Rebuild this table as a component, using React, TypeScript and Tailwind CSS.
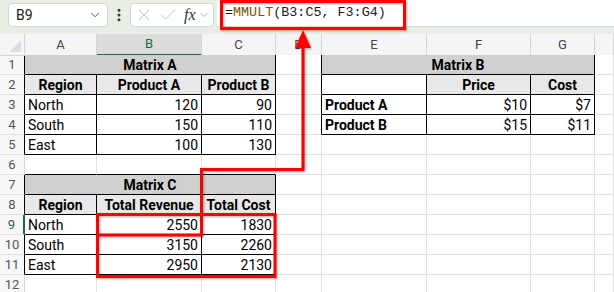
import React from 'react';
import { ChevronDown, X, Check, EllipsisVertical } from 'lucide-react';

type Cell = {
  t?: string;
  b?: boolean;
  align?: 'l' | 'c' | 'r';
  bg?: 'title' | 'head';
  span?: boolean;
};

const COLS = ['A', 'B', 'C', 'D', 'E', 'F', 'G', 'H'];

const title = (t: string): Cell => ({ t, b: true, align: 'c', bg: 'title', span: true });
const head = (t: string): Cell => ({ t, b: true, align: 'c', bg: 'head' });
const num = (t: string): Cell => ({ t, align: 'r' });

const SHEET: Record<number, Record<string, Cell>> = {
  1: { A: title('Matrix A'), E: title('Matrix B') },
  2: { A: head('Region'), B: head('Product A'), C: head('Product B'), F: head('Price'), G: head('Cost') },
  3: { A: { t: 'North' }, B: num('120'), C: num('90'), E: { t: 'Product A', b: true }, F: num('$10'), G: num('$7') },
  4: { A: { t: 'South' }, B: num('150'), C: num('110'), E: { t: 'Product B', b: true }, F: num('$15'), G: num('$11') },
  5: { A: { t: 'East' }, B: num('100'), C: num('130') },
  7: { A: title('Matrix C') },
  8: { A: head('Region'), B: head('Total Revenue'), C: head('Total Cost') },
  9: { A: { t: 'North' }, B: num('2550'), C: num('1830') },
  10: { A: { t: 'South' }, B: num('3150'), C: num('2260') },
  11: { A: { t: 'East' }, B: num('2950'), C: num('2130') },
};

function inTable(row: number, col: number) {
  if (col >= 1 && col <= 3) return (row >= 1 && row <= 5) || (row >= 7 && row <= 11);
  if (col >= 5 && col <= 7) return row >= 1 && row <= 4;
  return false;
}

function Toolbar() {
  return (
    <div className="relative flex h-[34px] shrink-0 items-start bg-[#e9eee5]">
      <div className="ml-[8px] mt-[3px] flex h-[24px] w-[100px] items-center justify-between rounded-[4px] border border-[#d4d4d4] bg-white pl-[7px] pr-[5px]">
        <span className="text-[14px] text-[#222]">B9</span>
        <ChevronDown size={14} strokeWidth={1.5} className="text-[#444]" />
      </div>
      <div className="mt-[7px] flex w-[22px] justify-center">
        <EllipsisVertical size={16} strokeWidth={2.5} className="text-[#333]" />
      </div>
      <div className="mt-[3px] flex h-[24px] w-[84px] items-center rounded-[4px] border border-[#d4d4d4] bg-white pl-[3px]">
        <X size={20} strokeWidth={1} className="text-[#b4b4b4]" />
        <Check size={20} strokeWidth={1} className="ml-[4px] text-[#b4b4b4]" />
        <span className="ml-[6px] font-['Liberation_Serif',serif] text-[16px] italic text-[#333]">fx</span>
        <ChevronDown size={12} strokeWidth={1.3} className="ml-[2px] text-[#888]" />
      </div>
      <div className="ml-[3px] flex h-[27px] flex-1 items-center border-b border-[#d8ddd4] bg-white pl-[8px]">
        <span className="font-['Liberation_Mono',monospace] text-[13.4px] text-[#1a1a1a]">
          =<span className="text-[#7a5200]">MMULT</span>(B3:C5, F3:G4)
        </span>
      </div>
    </div>
  );
}

function ColumnHeader() {
  return (
    <div className="grid h-[21px] shrink-0 grid-cols-[25px_72px_105px_74px_46px_105px_104px_64px_19px] bg-[#f5f5f5]">
      <div className="relative border-r border-b border-r-[#d6d6d6] border-b-[#d6d6d6]">
        <div className="absolute right-[3px] bottom-[3px] h-0 w-0 border-l-[12px] border-t-[12px] border-l-transparent border-t-transparent border-r-0 border-b-[12px] border-b-[#dedede]" />
      </div>
      {COLS.map((c, i) => {
        const selected = c === 'B';
        const black = inTable(1, i + 1);
        return (
          <div
            key={c}
            className={
              'flex items-center justify-center border-r border-r-[#d6d6d6] text-[13px] ' +
              (selected
                ? 'border-b-2 border-b-[#1d6b40] bg-[#dcdcdc] text-[#1d6b40]'
                : black
                  ? 'border-b border-b-black text-[#444]'
                  : 'border-b border-b-[#d6d6d6] text-[#444]')
            }
          >
            {c === 'H' ? '' : c}
          </div>
        );
      })}
    </div>
  );
}

function SheetRow({ row }: { row: number }) {
  const data = SHEET[row] || {};
  const cells: React.ReactNode[] = [];
  for (let i = 0; i < COLS.length; i++) {
    const col = i + 1;
    const key = COLS[i];
    const cell = data[key];
    const span = cell?.span;
    const lastCol = span ? col + 2 : col;
    const rightBlack = inTable(row, lastCol) || inTable(row, lastCol + 1);
    const bottomBlack = inTable(row, col) || inTable(row + 1, col);
    cells.push(
      <div
        key={key}
        className={
          'flex h-[20px] items-center overflow-hidden whitespace-nowrap border-r border-b px-[3px] pt-[1px] text-[14px] leading-none text-black ' +
          (span ? 'col-span-3 ' : '') +
          (rightBlack ? 'border-r-black ' : 'border-r-[#e1e1e1] ') +
          (bottomBlack ? 'border-b-black ' : 'border-b-[#e1e1e1] ') +
          (cell?.bg === 'title' ? 'bg-[#d0d0d0] ' : cell?.bg === 'head' ? 'bg-[#e8e8e8] ' : 'bg-white ') +
          (cell?.b ? 'font-bold ' : '') +
          (cell?.align === 'c' ? 'justify-center' : cell?.align === 'r' ? 'justify-end' : 'justify-start')
        }
      >
        {cell?.t}
      </div>
    );
    if (span) i += 2;
  }
  const active = row === 9;
  return (
    <>
      <div
        className={
          'flex h-[20px] items-center justify-center border-b border-b-[#e1e1e1] bg-[#f7f7f7] text-[13px] ' +
          (active
            ? 'border-r-2 border-r-[#1d6b40] bg-[#dcdcdc] text-[#1d6b40]'
            : inTable(row, 1)
              ? 'border-r border-r-black text-[#555]'
              : 'border-r border-r-[#d6d6d6] text-[#555]')
        }
      >
        {row}
      </div>
      {cells}
    </>
  );
}

function Annotations() {
  return (
    <svg
      className="pointer-events-none absolute left-0 top-0 drop-shadow-[1px_1px_1px_rgba(0,0,0,0.35)]"
      width={614}
      height={292}
      viewBox="0 0 614 292"
    >
      <g fill="none" stroke="#ff0000" strokeWidth={3}>
        <rect x={221.5} y={1.5} width={183} height={27} />
        <rect x={97.5} y={214.5} width={177.5} height={62} />
        <polyline points="97.5,235 201.5,235 201.5,169.5 303,169.5 303,46" strokeLinejoin="miter" />
      </g>
      <polygon points="303,30 295,48 311,48" fill="#ff0000" />
    </svg>
  );
}

export default function App() {
  const rows = Array.from({ length: 12 }, (_, i) => i + 1);
  return (
    <div className="relative flex h-[292px] w-[614px] flex-col overflow-hidden bg-white font-['Roboto',sans-serif]">
      <Toolbar />
      <ColumnHeader />
      <div className="grid grid-cols-[25px_72px_105px_74px_46px_105px_104px_64px_19px]">
        {rows.map((r) => (
          <SheetRow key={r} row={r} />
        ))}
      </div>
      <Annotations />
    </div>
  );
}
